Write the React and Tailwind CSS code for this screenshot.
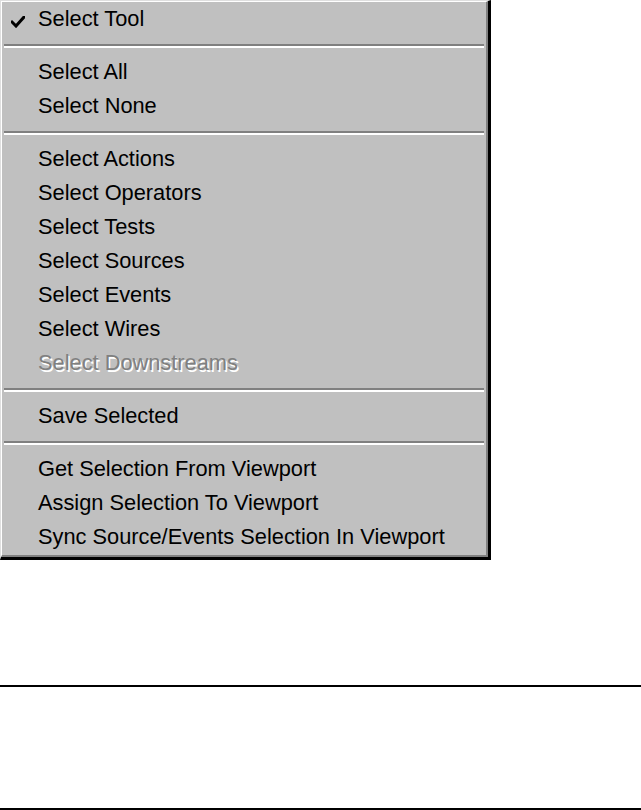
import React from "react";

const sections = [
  [{ label: "Select Tool", checked: true }],
  [{ label: "Select All" }, { label: "Select None" }],
  [
    { label: "Select Actions" },
    { label: "Select Operators" },
    { label: "Select Tests" },
    { label: "Select Sources" },
    { label: "Select Events" },
    { label: "Select Wires" },
    { label: "Select Downstreams", disabled: true },
  ],
  [{ label: "Save Selected" }],
  [
    { label: "Get Selection From Viewport" },
    { label: "Assign Selection To Viewport" },
    { label: "Sync Source/Events Selection In Viewport" },
  ],
];

const Check = () => (
  <svg width="14" height="12" viewBox="0 0 14 12" className="absolute left-[9px] top-[14px]">
    <path d="M1 6 L5 10 L13 1" fill="none" stroke="#000" strokeWidth="3" strokeLinecap="square" />
  </svg>
);

const MenuItem = ({ item }) => (
  <div className="relative h-[34px] flex items-center pl-[36px] whitespace-nowrap">
    {item.checked && <Check />}
    <span
      className={
        item.disabled
          ? "text-[#808080] [text-shadow:1.5px_1.5px_0_#ffffff]"
          : "text-black"
      }
    >
      {item.label}
    </span>
  </div>
);

const Separator = () => (
  <div className="h-[19px] flex flex-col justify-center px-[2px]">
    <div className="h-[2px] bg-[#808080]" />
    <div className="h-[2px] bg-white" />
  </div>
);

export default function App() {
  return (
    <div className="w-[641px] h-[810px] bg-white relative overflow-hidden font-['Liberation_Sans',Arial,sans-serif]">
      <div className="w-[491px] border-r-[3px] border-b-[3px] border-black border-l-[1px] border-t-[1px] border-l-[#dfdfdf] border-t-[#dfdfdf]">
        <div className="pb-[1px] border-l-[1px] border-t-[1px] border-r-[2px] border-b-[2px] border-l-white border-t-white border-r-[#808080] border-b-[#808080] bg-[#c0c0c0] text-[21.8px] leading-none">
          {sections.map((sec, i) => (
            <React.Fragment key={i}>
              {i > 0 && <Separator />}
              {sec.map((item) => (
                <MenuItem key={item.label} item={item} />
              ))}
            </React.Fragment>
          ))}
        </div>
      </div>
      <div className="mt-[125px] h-[2px] bg-black" />
      <div className="mt-[121px] h-[2px] bg-black" />
    </div>
  );
}
